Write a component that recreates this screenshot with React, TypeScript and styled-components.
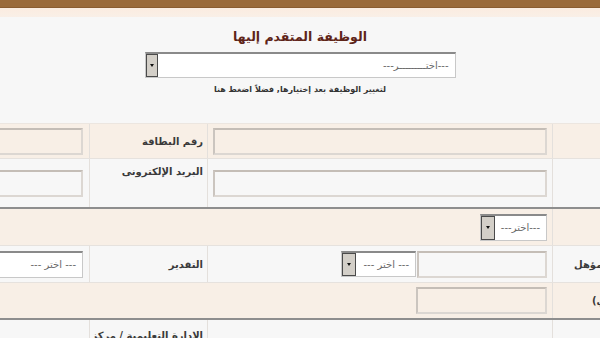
import React from "react";
import styled, { createGlobalStyle } from "styled-components";

const GlobalStyle = createGlobalStyle`
  html, body { margin: 0; padding: 0; }
  body {
    background: #f7f7f7;
    overflow: hidden;
    font-family: "DejaVu Sans", sans-serif;
    width: 600px;
    height: 338px;
  }
`;

const TopBar = styled.div`
  height: 7px;
  background: #9a6a3a;
  border-bottom: 1px solid #8a5c30;
`;

const TopStrip = styled.div`
  height: 9px;
  background: linear-gradient(#fbece0, #f9efe7);
`;

const Header = styled.div`
  display: flex;
  flex-direction: column;
  align-items: center;
  direction: rtl;
  padding-top: 11px;
`;

const Title = styled.div`
  font-size: 12.5px;
  font-weight: bold;
  color: #5e2418;
  line-height: 18px;
  height: 18px;
`;

const SelectBox = styled.div<{ $w: number; $h?: number }>`
  direction: rtl;
  display: flex;
  align-items: center;
  box-sizing: border-box;
  width: ${(p) => p.$w}px;
  height: ${(p) => p.$h ?? 26}px;
  background: #ffffff;
  border: 1px solid #c8c8c8;
  border-top: 2px solid #8a8a8a;
  flex-shrink: 0;
`;

const SelectText = styled.span<{ $size?: number }>`
  flex: 1;
  font-size: ${(p) => p.$size ?? 10}px;
  color: #6a6a6a;
  padding-right: 6px;
  white-space: nowrap;
  overflow: hidden;
`;

const ArrowBtn = styled.span<{ $w?: number }>`
  width: ${(p) => p.$w ?? 11}px;
  align-self: stretch;
  box-sizing: border-box;
  background: #d3cfc8;
  border: 1px solid #4a4a4a;
  display: flex;
  align-items: center;
  justify-content: center;
  &::after {
    content: "";
    border-left: 2.5px solid transparent;
    border-right: 2.5px solid transparent;
    border-top: 3px solid #111;
  }
`;

const Hint = styled.div`
  margin-top: 6px;
  font-size: 8px;
  font-weight: bold;
  color: #333;
  line-height: 11px;
`;

const TableWrap = styled.div`
  width: 713px;
  margin-left: -61px;
  margin-top: 28px;
  direction: rtl;
  border-top: 1px solid #ece6e0;
`;

const Row = styled.div<{ $h: number; $tone: "beige" | "light"; $sep?: boolean }>`
  display: grid;
  grid-template-columns: 100px 345px 118px 150px;
  height: ${(p) => p.$h}px;
  background: ${(p) => (p.$tone === "beige" ? "#f8efe6" : "#f7f7f7")};
  border-bottom: ${(p) => (p.$sep ? "2px solid #8e8e8e" : "1px solid #e6e2de")};
  box-sizing: border-box;
`;

const Cell = styled.div<{ $span?: number; $top?: number; $pad?: number }>`
  grid-column: span ${(p) => p.$span ?? 1};
  display: flex;
  align-items: ${(p) => (p.$top ? "flex-start" : "center")};
  justify-content: flex-start;
  gap: 1px;
  padding: ${(p) => p.$top ?? 0}px ${(p) => p.$pad ?? 5}px 0 5px;
  border-left: 1px solid #e4e0dc;
  overflow: hidden;
  box-sizing: border-box;
`;

/* label cell whose text is anchored by its left (end) edge */
const EndCell = styled.div<{ $left: number }>`
  display: flex;
  align-items: center;
  justify-content: flex-end;
  padding-left: ${(p) => p.$left}px;
  border-left: 1px solid #e4e0dc;
  overflow: hidden;
  box-sizing: border-box;
`;

const Label = styled.span`
  font-size: 10px;
  font-weight: bold;
  color: #3a3a3a;
  white-space: nowrap;
`;

const Input = styled.div<{ $w?: number }>`
  box-sizing: border-box;
  height: 27px;
  width: ${(p) => (p.$w ? `${p.$w}px` : "100%")};
  border-style: solid;
  border-width: 2px;
  border-color: #c4bdb6 #dcd7d2 #dcd7d2 #cbc5bf;
  flex-shrink: 0;
`;

export default function App() {
  return (
    <>
      <GlobalStyle />
      <TopBar />
      <TopStrip />
      <Header>
        <Title>الوظيفة المتقدم إليها</Title>
        <SelectBox $w={311} style={{ marginTop: 6 }}>
          <SelectText $size={10}>---اختـــــــــر---</SelectText>
          <ArrowBtn $w={12} />
        </SelectBox>
        <Hint>لتغيير الوظيفة بعد إختيارها, فضلاً اضغط هنا</Hint>
      </Header>
      <TableWrap>
        <Row $h={35} $tone="beige">
          <Cell />
          <Cell>
            <Input />
          </Cell>
          <Cell $pad={4}>
            <Label>رقم البطاقة</Label>
          </Cell>
          <Cell $pad={6}>
            <Input />
          </Cell>
        </Row>
        <Row $h={50} $tone="light" $sep>
          <Cell />
          <Cell>
            <Input />
          </Cell>
          <Cell $top={7} $pad={4}>
            <Label>البريد الإلكترونى</Label>
          </Cell>
          <Cell $pad={6}>
            <Input />
          </Cell>
        </Row>
        <Row $h={37} $tone="beige">
          <Cell />
          <Cell $span={3}>
            <SelectBox $w={67} $h={27}>
              <SelectText $size={10}>---اختر---</SelectText>
              <ArrowBtn $w={14} />
            </SelectBox>
          </Cell>
        </Row>
        <Row $h={37} $tone="light">
          <EndCell $left={21}>
            <Label>المؤهل</Label>
          </EndCell>
          <Cell>
            <Input $w={130} />
            <SelectBox $w={75} $h={26}>
              <SelectText $size={10}>--- اختر ---</SelectText>
              <ArrowBtn $w={14} />
            </SelectBox>
          </Cell>
          <Cell $pad={4}>
            <Label>التقدير</Label>
          </Cell>
          <Cell $pad={6}>
            <SelectBox $w={140} $h={27}>
              <SelectText $size={10}>--- اختر ---</SelectText>
              <ArrowBtn $w={14} />
            </SelectBox>
          </Cell>
        </Row>
        <Row $h={37} $tone="beige" $sep>
          <EndCell $left={39}>
            <Label>سنة التخرج (ميلادي)</Label>
          </EndCell>
          <Cell $span={3}>
            <Input $w={131} />
          </Cell>
        </Row>
        <Row $h={40} $tone="light">
          <Cell />
          <Cell />
          <Cell $top={10} $pad={4}>
            <Label>الادارة التعليمية / مركز</Label>
          </Cell>
          <Cell />
        </Row>
      </TableWrap>
    </>
  );
}
